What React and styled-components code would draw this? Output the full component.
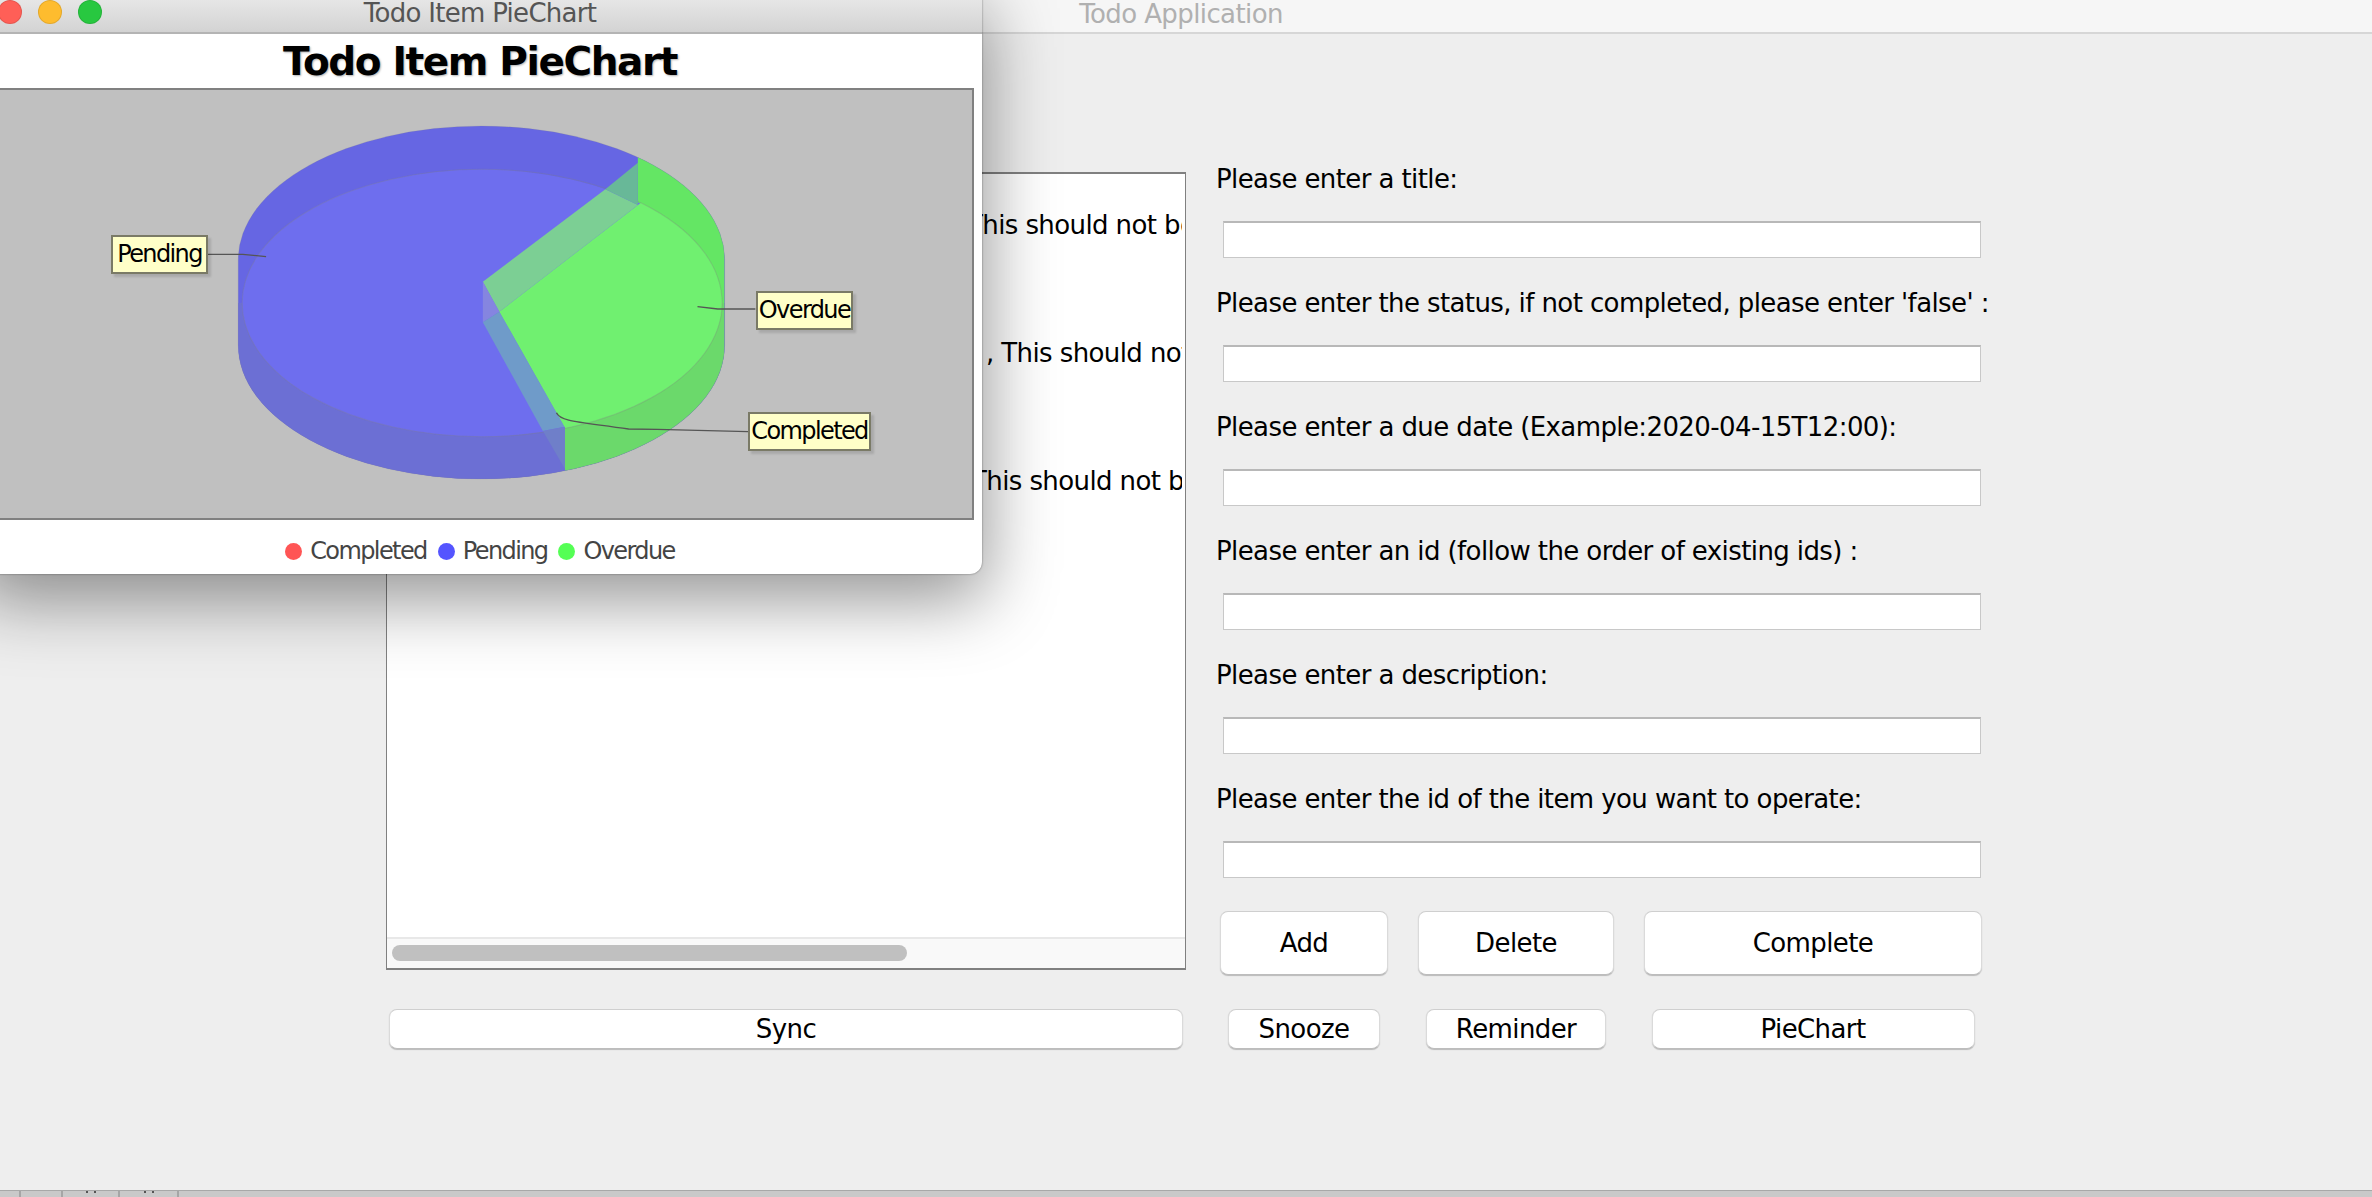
import React from "react";
import styled, { createGlobalStyle } from "styled-components";

const Global = createGlobalStyle`
  html, body { margin: 0; padding: 0; background: #eeeeee; }
  body { font-family: "DejaVu Sans", "Liberation Sans", sans-serif; }
  * { box-sizing: border-box; }
`;

const Screen = styled.div`
  position: relative;
  width: 2372px;
  height: 1197px;
  overflow: hidden;
  background: #eeeeee;
  display: flex;
  flex-direction: column;
  color: #000;
  font-size: 26px;
  letter-spacing: -0.6px;
`;

const AppBar = styled.header`
  height: 34px;
  flex: none;
  background: #f6f6f6;
  border-bottom: 2px solid #d6d6d6;
  line-height: 28px;
  text-align: center;
  color: #b0b0b0;
  padding-right: 10px;
`;

const Content = styled.main`
  flex: 1;
  padding: 138px 0 0 386px;
  display: grid;
  grid-template-columns: 800px 766px;
  grid-template-rows: 803px auto;
  column-gap: 30px;
  row-gap: 34px;
  align-content: start;
`;

const ListBox = styled.div`
  height: 798px;
  background: #fff;
  border: 1px solid #808080;
  border-top-width: 2px;
  border-bottom-width: 2px;
  display: flex;
  flex-direction: column;
`;

const ListViewport = styled.div`
  flex: 1;
  margin-right: 3px;
  padding-top: 36px;
  overflow: hidden;
  display: flex;
  flex-direction: column;
  gap: 98px;
`;

const ListRow = styled.div`
  height: 30px;
  line-height: 30px;
  white-space: nowrap;
  padding-left: ${(p) => p.$indent}px;
`;

const ScrollTrack = styled.div`
  height: 31px;
  flex: none;
  background: #f9f9f9;
  border-top: 2px solid #e8e8e8;
  padding: 6px 0 0 5px;
`;

const ScrollThumb = styled.div`
  width: 515px;
  height: 16px;
  border-radius: 8px;
  background: #c0c0c0;
`;

const Form = styled.section`
  margin-top: -8px;
  display: flex;
  flex-direction: column;
`;

const Field = styled.div`
  height: 124px;
  display: flex;
  flex-direction: column;
`;

const FieldLabel = styled.label`
  height: 30px;
  line-height: 30px;
  white-space: nowrap;
`;

const TextInput = styled.div`
  width: 758px;
  height: 37px;
  margin: 27px 0 0 7px;
  background: #fff;
  border: 1px solid #c8c8c8;
  border-top: 2px solid #b8b8b8;
`;

const ButtonGrid = styled.div`
  display: grid;
  grid-template-columns: 168px 196px 338px;
  column-gap: 30px;
  justify-items: center;
  margin-left: 4px;
  width: 762px;
  margin-top: ${(p) => p.$top || 0}px;
`;

const Button = styled.button`
  width: ${(p) => p.$w}px;
  height: ${(p) => p.$h}px;
  padding: 0;
  font: inherit;
  letter-spacing: inherit;
  color: #000;
  background: #fff;
  border: 1px solid #dadada;
  border-top-color: #cfcfcf;
  border-bottom-color: #bdbdbd;
  border-radius: 8px;
  box-shadow: 0 1px 1px rgba(0, 0, 0, 0.22);
`;

const SyncButton = styled(Button)`
  margin-left: 3px;
`;

const Dock = styled.footer`
  height: 7px;
  flex: none;
  background: #c9c9c9;
  border-top: 1px solid #a8a8a8;
  display: flex;
  padding-left: 19px;
`;

const DockCell = styled.div`
  width: ${(p) => p.$w}px;
  border-left: 2px solid #a6a6a6;
  display: flex;
  justify-content: center;
  gap: 6px;
`;

const DockDot = styled.i`
  width: 2px;
  height: 2px;
  background: #555;
`;

const ChartWindow = styled.section`
  position: absolute;
  left: -22px;
  top: -10px;
  width: 1004px;
  height: 584px;
  background: #fff;
  border-radius: 0 0 12px 12px;
  box-shadow: 0 22px 70px 4px rgba(0, 0, 0, 0.42), 0 0 2px rgba(0, 0, 0, 0.5);
  display: flex;
  flex-direction: column;
  overflow: visible;
`;

const WinBar = styled.header`
  position: relative;
  height: 44px;
  flex: none;
  background: linear-gradient(#ececec, #d3d3d3);
  border-bottom: 2px solid #b4b4b4;
  padding-top: 10px;
  text-align: center;
  line-height: 26px;
  letter-spacing: -0.7px;
  color: #555;
`;

const Light = styled.span`
  position: absolute;
  top: 10px;
  left: ${(p) => p.$x}px;
  width: 24px;
  height: 24px;
  border-radius: 50%;
  background: ${(p) => p.$c};
  border: 1px solid rgba(0, 0, 0, 0.1);
`;

const ChartTitle = styled.h1`
  margin: 0;
  height: 54px;
  flex: none;
  line-height: 56px;
  text-align: center;
  font-size: 39px;
  font-weight: 700;
  letter-spacing: -1.4px;
  text-shadow: 1px 1px 2px rgba(0, 0, 0, 0.3);
`;

const Plot = styled.div`
  position: relative;
  margin: 0 8px 0 9px;
  height: 432px;
  flex: none;
  background: #c0c0c0;
  border: 2px solid #808080;
`;

const PieSvg = styled.svg`
  position: absolute;
  left: 211px;
  top: 10px;
  width: 560px;
  height: 400px;
`;

const PieLabel = styled.div`
  position: absolute;
  left: ${(p) => p.$x}px;
  top: ${(p) => p.$y}px;
  width: ${(p) => p.$w}px;
  height: 39px;
  line-height: 35px;
  text-align: center;
  font-size: 24px;
  letter-spacing: -1.6px;
  white-space: nowrap;
  background: #ffffc8;
  border: 2px solid #7a7a66;
  box-shadow: 3px 3px 2px rgba(0, 0, 0, 0.12);
`;

const Legend = styled.div`
  flex: 1;
  display: flex;
  align-items: center;
  justify-content: center;
  gap: 11px;
  padding: 8px 0 0 0;
  font-size: 24px;
  letter-spacing: -1.6px;
  color: #444;
`;

const LegendItem = styled.span`
  display: flex;
  align-items: center;
  gap: 8px;
`;

const LegendDot = styled.i`
  width: 17px;
  height: 17px;
  border-radius: 50%;
  background: ${(p) => p.$c};
`;

const FIELDS = [
  "Please enter a title:",
  "Please enter the status, if not completed, please enter 'false' :",
  "Please enter a due date (Example:2020-04-15T12:00):",
  "Please enter an id (follow the order of existing ids) :",
  "Please enter a description:",
  "Please enter the id of the item you want to operate:",
];

function Pie() {
  const hull = "M107 479 A681 401 0 0 1 1469 479 L1469 736 A681 401 0 0 1 107 736 Z";
  return (
    <PieSvg viewBox="0 0 1568 1200" preserveAspectRatio="none">
      <defs>
        <clipPath id="hull">
          <path d={hull} />
        </clipPath>
        <clipPath id="face">
          <ellipse cx="790" cy="609" rx="672" ry="401" />
        </clipPath>
      </defs>
      <path d={hull} fill="#6666e3" />
      <g clipPath="url(#hull)">
        <rect x="100" y="609" width="1380" height="540" fill="#6c6fd4" />
        <rect x="1226" y="70" width="260" height="539" fill="#64e664" />
        <rect x="1022" y="609" width="460" height="540" fill="#6bd96b" />
      </g>
      <path d={hull} fill="none" stroke="#808080" strokeOpacity=".25" strokeWidth="2" />
      <ellipse cx="786" cy="609" rx="668" ry="401" fill="#6e6eee" />
      <polygon clipPath="url(#face)" points="838,635 1300,254 1500,254 1500,1100 1080,1094" fill="#70f070" />
      <ellipse cx="790" cy="609" rx="672" ry="401" fill="none" stroke="#808080" strokeOpacity=".3" strokeWidth="3" />
      <polygon points="792,545 1135,268 1226,315 838,635" fill="#7ccf94" />
      <polygon points="1135,268 1226,188 1226,315" fill="#68b898" />
      <polygon points="792,545 838,635 792,667" fill="#8585e0" />
      <polygon points="792,667 838,635 1020,980 960,993" fill="#6f9bc9" />
      <polygon points="960,993 1022,980 1022,1107" fill="#6f7fc9" />
      <g fill="none" stroke="#555" strokeWidth="4">
        <path d="M22 463 L120 463 L185 470" />
        <path d="M1393 620 L1450 627 L1555 627" />
        <path d="M998 938 C1010 965 1060 965 1200 987 L1280 988 L1535 995" />
      </g>
    </PieSvg>
  );
}

export default function App() {
  return (
    <Screen>
      <Global />
      <AppBar>Todo Application</AppBar>
      <Content>
        <ListBox>
          <ListViewport>
            <ListRow $indent={580}>This should not be completed</ListRow>
            <ListRow $indent={599}>, This should not be overdue</ListRow>
            <ListRow $indent={584}>This should not be pending</ListRow>
          </ListViewport>
          <ScrollTrack>
            <ScrollThumb />
          </ScrollTrack>
        </ListBox>
        <Form>
          {FIELDS.map((f) => (
            <Field key={f}>
              <FieldLabel>{f}</FieldLabel>
              <TextInput />
            </Field>
          ))}
          <ButtonGrid $top={3}>
            <Button $w={168} $h={64}>Add</Button>
            <Button $w={196} $h={64}>Delete</Button>
            <Button $w={338} $h={64}>Complete</Button>
          </ButtonGrid>
        </Form>
        <SyncButton $w={794} $h={40}>Sync</SyncButton>
        <ButtonGrid>
          <Button $w={152} $h={40}>Snooze</Button>
          <Button $w={180} $h={40}>Reminder</Button>
          <Button $w={323} $h={40}>PieChart</Button>
        </ButtonGrid>
      </Content>
      <Dock>
        <DockCell $w={42} />
        <DockCell $w={57}><DockDot /><DockDot /></DockCell>
        <DockCell $w={59}><DockDot /><DockDot /></DockCell>
        <DockCell $w={1} />
      </Dock>
      <ChartWindow>
        <WinBar>
          <Light $x={20} $c="#ff5f57" />
          <Light $x={60} $c="#febc2e" />
          <Light $x={100} $c="#28c840" />
          Todo Item PieChart
        </WinBar>
        <ChartTitle>Todo Item PieChart</ChartTitle>
        <Plot>
          <Pie />
          <PieLabel $x={122} $y={145} $w={97}>Pending</PieLabel>
          <PieLabel $x={767} $y={201} $w={97}>Overdue</PieLabel>
          <PieLabel $x={759} $y={322} $w={123}>Completed</PieLabel>
        </Plot>
        <Legend>
          <LegendItem><LegendDot $c="#ff5555" />Completed</LegendItem>
          <LegendItem><LegendDot $c="#5555ff" />Pending</LegendItem>
          <LegendItem><LegendDot $c="#55ff55" />Overdue</LegendItem>
        </Legend>
      </ChartWindow>
    </Screen>
  );
}
